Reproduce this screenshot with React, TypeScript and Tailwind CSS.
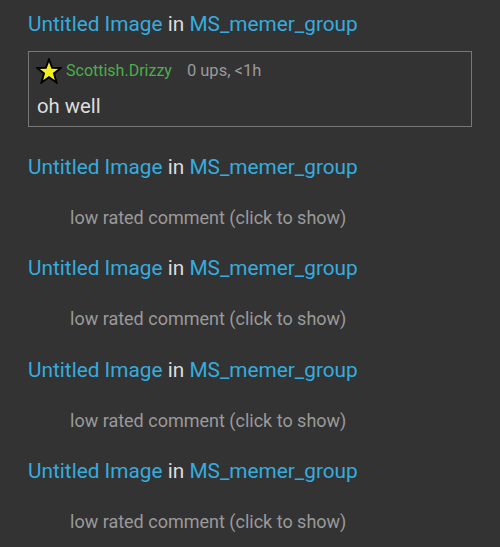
import React from "react";

const Title = () => (
  <div className="text-[20.8px] leading-[30px]">
    <a className="text-[#35acdf]">Untitled Image</a>
    <span className="text-[#dddddd]"> in </span>
    <a className="text-[#35acdf]">MS_memer_group</a>
  </div>
);

const Star = () => (
  <svg width="26" height="26" viewBox="0 0 24 24" className="shrink-0">
    <polygon
      points="12,1.2 14.9,9 23,9.2 16.6,14.2 18.9,22.6 12,17.7 5.1,22.6 7.4,14.2 1,9.2 9.1,9"
      fill="#f4f020"
      stroke="#000"
      strokeWidth="1.8"
      strokeLinejoin="miter"
    />
  </svg>
);

const LowRated = () => (
  <div>
    <Title />
    <div className="mt-[23px] mb-[22.4px] pl-[42px] text-[18px] leading-[26px] text-[#9a9a9a]">
      low rated comment (click to show)
    </div>
  </div>
);

export default function App() {
  return (
    <div
      className="min-h-[547px] w-[500px] bg-[#333333] pl-[28px] pr-[28px] pt-[9px]"
      style={{ fontFamily: "Roboto, 'Liberation Sans', sans-serif" }}
    >
      <Title />
      <div className="mt-[12px] mb-[25px] border border-[#777777] px-[7px] pt-[6px] pb-[5px]">
        <div className="flex h-[26px] items-center">
          <Star />
          <span className="ml-[4px] text-[16px] leading-[24px] text-[#4cae4c]">Scottish.Drizzy</span>
          <span className="ml-[15px] text-[16.5px] leading-[24px] text-[#9a9a9a]">0 ups, &lt;1h</span>
        </div>
        <div className="mt-[7px] pl-[1px] text-[20.3px] leading-[30px] text-[#dddddd]">oh well</div>
      </div>
      <LowRated />
      <LowRated />
      <LowRated />
      <LowRated />
    </div>
  );
}
